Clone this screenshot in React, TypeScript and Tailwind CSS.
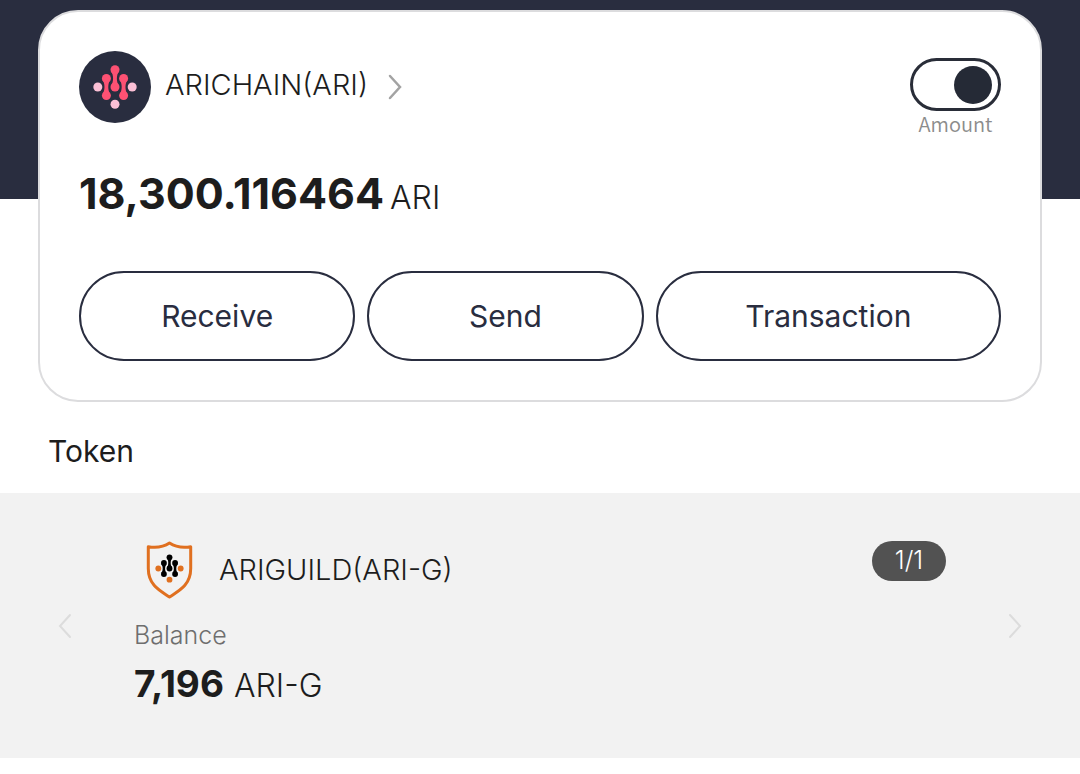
import { useState } from "react";

type MarkProps = { main: string; accent: string };

/* Node-and-link mark centred on 0,0; nodes sit on an 8.6 unit grid. */
function NodeMark({ main, accent }: MarkProps) {
  const link = "M-4 1.6C-1.2 4.6 -1.2 12.6 -4 15.6H4C1.2 12.6 1.2 4.6 4 1.6Z";
  return (
    <g>
      <g fill={main}>
        <circle cx="0" cy="-17.2" r="4.5" />
        <circle cx="0" cy="0" r="4.5" />
        <path d={link} transform="translate(0 -17.2)" />
        <circle cx="-8.6" cy="-8.6" r="4.5" />
        <circle cx="-8.6" cy="8.6" r="4.5" />
        <path d={link} transform="translate(-8.6 -8.6)" />
        <circle cx="8.6" cy="-8.6" r="4.5" />
        <circle cx="8.6" cy="8.6" r="4.5" />
        <path d={link} transform="translate(8.6 -8.6)" />
      </g>
      <g fill={accent}>
        <circle cx="-17.2" cy="0" r="4.5" />
        <circle cx="17.2" cy="0" r="4.5" />
        <circle cx="0" cy="17.2" r="4.5" />
      </g>
    </g>
  );
}

function ChainLogo() {
  return (
    <svg className="size-[72px] shrink-0" viewBox="-36 -36 72 72" aria-hidden="true">
      <circle r="36" fill="#292d3f" />
      <NodeMark main="#fd5173" accent="#fbc0d6" />
    </svg>
  );
}

function GuildLogo() {
  return (
    <svg className="h-[58px] w-12 shrink-0" viewBox="-24.5 -27.5 48 58" aria-hidden="true">
      <path
        d="M0 -25.5C-6 -21.5 -13 -20.5 -21.2 -21.8V0C-21.2 17 -9 22.5 0 28.5C9 22.5 21.2 17 21.2 0V-21.8C13 -20.5 6 -21.5 0 -25.5Z"
        fill="none"
        stroke="#e07020"
        strokeWidth="3"
        strokeLinejoin="round"
      />
      <g transform="scale(0.65)">
        <NodeMark main="#000000" accent="#e07020" />
      </g>
    </svg>
  );
}

function Chevron({ flip = false, className }: { flip?: boolean; className: string }) {
  return (
    <svg
      className={className}
      viewBox="0 0 14 26"
      fill="none"
      stroke="currentColor"
      strokeLinecap="round"
      aria-hidden="true"
    >
      <path d={flip ? "M12 2L2 13L12 24" : "M2 2L12 13L2 24"} />
    </svg>
  );
}

const pill =
  "h-[90px] rounded-full border-2 border-[#292d3f] bg-white text-[30px] font-normal text-[#292d3f]";

export default function App() {
  const [showAmount, setShowAmount] = useState(true);
  return (
    <main className="min-h-screen bg-white font-['Inter','Liberation_Sans',sans-serif] text-[#1d1d1d]">
      <section className="bg-[linear-gradient(#292d3f_199px,#ffffff_199px)] px-[38px] pt-[10px]">
        <div className="rounded-[40px] border-2 border-[#dcdcde] bg-white p-[39px]">
          <div className="flex items-start justify-between">
            <a href="#arichain" className="flex items-center">
              <ChainLogo />
              <span className="ml-[14px] pb-1 text-[29px] leading-9 font-light">ARICHAIN(ARI)</span>
              <Chevron className="ml-5 h-[26px] w-[14px] stroke-[2.5] text-[#a3a3a3]" />
            </a>
            <label className="flex flex-col items-center pt-[7px]">
              <input
                type="checkbox"
                role="switch"
                checked={showAmount}
                onChange={(e) => setShowAmount(e.target.checked)}
                className="flex h-[53px] w-[91px] appearance-none items-center rounded-full border-[3px] border-[#292d38] bg-white px-[6px] before:block before:size-[38px] before:rounded-full before:bg-[#252a36] before:content-[''] checked:justify-end"
              />
              <span className="font-['Noto_Sans_CJK_KR','Noto_Sans',sans-serif] text-[20px] leading-[26px] font-[350] text-[#8c8c8c]">
                Amount
              </span>
            </label>
          </div>
          <p className="mt-7 flex items-baseline gap-[6px] leading-[56px]">
            <strong className="text-[43px] font-bold">18,300.116464</strong>
            <span className="text-[32px] font-light">ARI</span>
          </p>
          <div className="mt-[45px] grid grid-cols-[4fr_4fr_5fr] gap-3">
            <button type="button" className={pill}>Receive</button>
            <button type="button" className={pill}>Send</button>
            <button type="button" className={pill}>Transaction</button>
          </div>
        </div>
      </section>

      <h2 className="px-12 pt-[29px] pb-[22px] text-[30px] leading-10 font-normal">Token</h2>

      <section className="flex items-center bg-[#f2f2f2] px-[58px] py-12">
        <button type="button" aria-label="Previous token">
          <Chevron flip className="h-[26px] w-[14px] stroke-2 text-[#dcdcdc]" />
        </button>
        <article className="mr-[62px] ml-[62px] flex-1">
          <div className="flex items-start justify-between">
            <div className="flex items-center pl-[11px]">
              <GuildLogo />
              <h3 className="ml-[26px] text-[29px] leading-9 font-light">ARIGUILD(ARI-G)</h3>
            </div>
            <span className="flex h-10 w-[74px] items-center justify-center rounded-full bg-[#525252] text-[25px] font-light text-white">
              1/1
            </span>
          </div>
          <p className="mt-[18px] text-[25px] leading-9 font-light text-[#6e6e6e]">Balance</p>
          <p className="mt-[7px] flex items-baseline gap-[10px] leading-[48px]">
            <strong className="text-[37px] font-bold">7,196</strong>
            <span className="text-[32px] font-light">ARI-G</span>
          </p>
        </article>
        <button type="button" aria-label="Next token">
          <Chevron className="h-[26px] w-[14px] stroke-2 text-[#dcdcdc]" />
        </button>
      </section>
    </main>
  );
}
